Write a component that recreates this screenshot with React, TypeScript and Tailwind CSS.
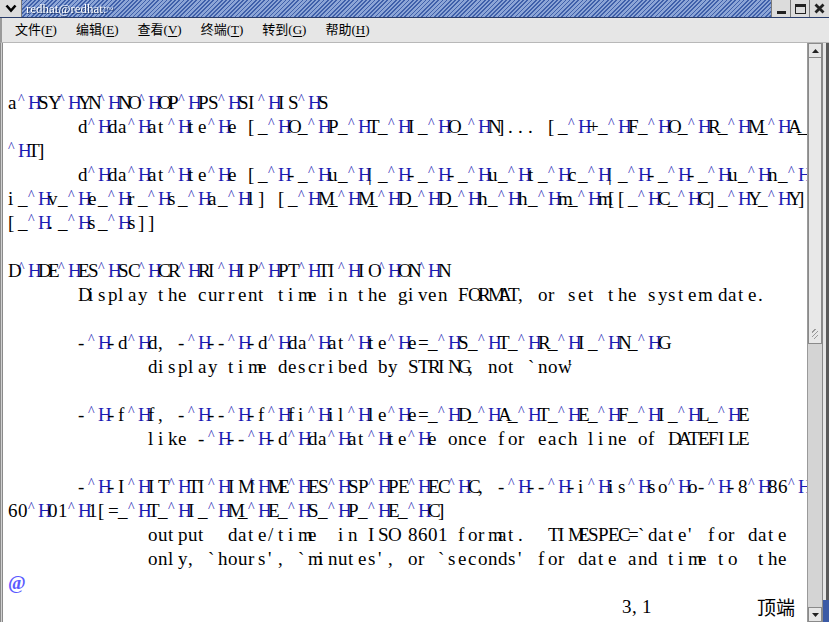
import React from 'react';

// vim showing raw man output: every ^H pair is drawn in the SpecialKey colour
const rows: string[] = [
  '',
  '',
  'a^HSY^HYN^HNO^HOP^HPS^HSI^HIS^HS',
  '       d^Hda^Hat^Hte^He [_^HO_^HP_^HT_^HI_^HO_^HN]... [_^H+_^HF_^HO_^HR_^HM_^HA_',
  '^HT]',
  '       d^Hda^Hat^Hte^He [_^H-_^Hu_^H|_^H-_^H-_^Hu_^Ht_^Hc_^H|_^H-_^H-_^Hu_^Hn_^H',
  'i_^Hv_^He_^Hr_^Hs_^Ha_^Hl] [_^HM_^HM_^HD_^HD_^Hh_^Hh_^Hm_^Hm[[_^HC_^HC]_^HY_^HY]',
  '[_^H._^Hs_^Hs]]',
  '',
  'D^HDE^HES^HSC^HCR^HRI^HIP^HPT^HTI^HIO^HON^HN',
  '       Display the current time in the given FORMAT, or set the system date.',
  '',
  '       -^H-d^Hd, -^H--^H-d^Hda^Hat^Hte^He=_^HS_^HT_^HR_^HI_^HN_^HG',
  "              display time described by STRING, not `now'",
  '',
  '       -^H-f^Hf, -^H--^H-f^Hfi^Hil^Hle^He=_^HD_^HA_^HT_^HE_^HF_^HI_^HL_^HE',
  '              like -^H--^H-d^Hda^Hat^Hte^He once for each line of DATEFILE',
  '',
  '       -^H-I^HIT^HTI^HIM^HME^HES^HSP^HPE^HEC^HC, -^H--^H-i^His^Hso^Ho-^H-8^H86^H',
  '60^H01^H1[=_^HT_^HI_^HM_^HE_^HS_^HP_^HE_^HC]',
  "              output  date/time  in ISO 8601 format.  TIMESPEC=`date' for date",
  "              only, `hours', `minutes', or `seconds' for date and time to  the",
];

type Cell = { ch: string; blue: boolean };

function parseRow(s: string): Cell[] {
  const chars = Array.from(s);
  const out: Cell[] = [];
  for (let i = 0; i < chars.length; i++) {
    if (chars[i] === '^' && chars[i + 1] === 'H') {
      out.push({ ch: '^', blue: true });
      out.push({ ch: 'H', blue: true });
      i++;
    } else {
      out.push({ ch: chars[i], blue: false });
    }
  }
  return out;
}

function TermRow({ text }: { text: string }) {
  const cells = parseRow(text);
  return (
    <div className="flex h-[24px] items-center leading-[24px]">
      {cells.map((c, i) =>
        c.ch === '^' ? (
          <span key={i} className="w-[10px] shrink-0 text-[14px] -translate-y-[3px] text-[#1c1cb4]">
            ^
          </span>
        ) : (
          <span
            key={i}
            className={`w-[10px] shrink-0 whitespace-pre ${c.blue ? 'text-[#1c1cb4]' : 'text-black'}`}
          >
            {c.ch}
          </span>
        )
      )}
    </div>
  );
}

function MenuItem({ zh, key_ }: { zh: string; key_: string }) {
  return (
    <span className="text-[13px] text-black">
      {zh}(<span className="underline underline-offset-2">{key_}</span>)
    </span>
  );
}

export default function App() {
  return (
    <div className="w-[829px] h-[622px] flex flex-col overflow-hidden bg-[#e6e6e6] font-['Liberation_Serif','Noto_Sans_CJK_SC',serif]">
      {/* title bar */}
      <div className="h-[18px] flex items-stretch border-b border-[#2a3d6a]">
        <div className="w-[22px] flex items-center justify-center bg-[#dcdcdc] border-r border-[#7a7a7a]">
          <svg width="12" height="9" viewBox="0 0 12 9">
            <path d="M1.5 1.5 L6 6.5 L10.5 1.5" stroke="#000" strokeWidth="2.6" fill="none" />
          </svg>
        </div>
        <div className="flex-1 flex items-center pl-[4px] bg-[#4d6fb8] bg-[image:repeating-linear-gradient(135deg,#3f60aa_0px,#3f60aa_1.2px,#8ca5d6_1.2px,#8ca5d6_3px)]">
          <span className="text-white text-[13px] leading-none drop-shadow-[1px_1px_0_#203a70]">redhat@redhat:~</span>
        </div>
        <div className="flex bg-[#dcdcdc]">
          <div className="w-[19px] flex items-end justify-center pb-[3px] border-l border-[#7a7a7a]">
            <div className="w-[9px] h-[3px] bg-[#222]" />
          </div>
          <div className="w-[19px] flex items-center justify-center border-l border-[#7a7a7a]">
            <div className="w-[11px] h-[10px] border border-[#222] border-t-[3px]" />
          </div>
          <div className="w-[20px] flex items-center justify-center border-l border-[#7a7a7a]">
            <svg width="11" height="11" viewBox="0 0 11 11">
              <path d="M1.5 1.5 L9.5 9.5 M9.5 1.5 L1.5 9.5" stroke="#222" strokeWidth="2.8" />
            </svg>
          </div>
        </div>
      </div>

      {/* menu bar */}
      <div className="h-[25px] flex items-center gap-[19px] pl-[13px] border-b border-[#b8b8b8] border-l-[2px] border-l-[#9a9a9a]">
        <MenuItem zh="文件" key_="F" />
        <MenuItem zh="编辑" key_="E" />
        <MenuItem zh="查看" key_="V" />
        <MenuItem zh="终端" key_="T" />
        <MenuItem zh="转到" key_="G" />
        <MenuItem zh="帮助" key_="H" />
      </div>

      {/* body */}
      <div className="flex-1 flex min-h-0">
        <div className="w-[3px] border-l border-r border-[#8a8a8a] bg-[#d0d0d0]" />
        <div className="w-[804px] bg-white overflow-hidden pl-[5px] text-[19px]">
          {rows.map((r, i) => (
            <TermRow key={i} text={r} />
          ))}
          <div className="flex h-[24px] items-center leading-[24px]">
            <span className="w-[10px] shrink-0 font-bold text-[#5b5bff]">@</span>
          </div>
          <div className="flex h-[24px] items-center leading-[24px] text-black">
            <span className="w-[614px] shrink-0" />
            <span className="w-[10px] shrink-0">3</span>
            <span className="w-[10px] shrink-0">,</span>
            <span className="w-[10px] shrink-0">1</span>
            <span className="w-[105px] shrink-0" />
            <span className="w-[40px] shrink-0 text-[19px] font-['Noto_Sans_CJK_SC',sans-serif]">顶端</span>
          </div>
        </div>

        {/* scrollbar */}
        <div className="w-[15px] flex flex-col bg-[#d4d4d4] border-l border-[#9a9a9a]">
          <div className="h-[15px] flex items-center justify-center bg-[#e6e6e6] border border-[#8a8a8a]">
            <svg width="7" height="4" viewBox="0 0 7 4">
              <path d="M0 4 L3.5 0 L7 4 Z" fill="#222" />
            </svg>
          </div>
          <div className="h-[286px] relative bg-[#e8e8e8] border border-[#8a8a8a] border-t-0">
            <div className="absolute bottom-[4px] left-[3px] right-[3px] h-[10px] bg-[image:repeating-linear-gradient(135deg,transparent_0px,transparent_2px,#9a9a9a_2px,#9a9a9a_3px)]" />
          </div>
          <div className="flex-1" />
          <div className="h-[15px] flex items-center justify-center bg-[#e6e6e6] border border-[#8a8a8a]">
            <svg width="7" height="4" viewBox="0 0 7 4">
              <path d="M0 0 L3.5 4 L7 0 Z" fill="#222" />
            </svg>
          </div>
        </div>

        {/* right frame */}
        <div className="w-[7px] flex flex-col border-l border-[#8a8a8a] bg-[#e6e6e6]">
          <div className="flex-1 border-r-[3px] border-[#5a5a5a]" />
          <div className="h-[22px] bg-[#3b5aa6]" />
        </div>
      </div>
    </div>
  );
}
